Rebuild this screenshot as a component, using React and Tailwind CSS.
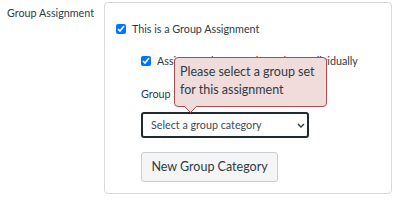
import React from "react";

export default function App() {
  return (
    <div className="w-[400px] h-[201px] bg-white flex text-[#2d3b45] text-[10.75px] font-['Lato','Liberation_Sans',sans-serif] overflow-hidden">
      {/* label column */}
      <div className="w-[104px] shrink-0 pl-[7px] pt-[5px] leading-[16px]">Group Assignment</div>

      {/* options panel */}
      <div className="mt-[2px] w-[288px] h-[192px] border border-[#d7dadc] rounded-[4px] pl-[11px] pt-[18px]">
        <label className="flex items-center gap-[6px] h-[16px]">
          <input type="checkbox" checked readOnly className="w-[10px] h-[10px] m-0" />
          <span>This is a Group Assignment</span>
        </label>

        <div className="pl-[25px] pt-[16px]">
          <label className="flex items-center gap-[6px] h-[16px]">
            <input type="checkbox" checked readOnly className="w-[10px] h-[10px] m-0" />
            <span>Assign Grades to Each Student Individually</span>
          </label>

          <div className="mt-[17px] leading-[16px]">Group Set</div>

          <div className="relative mt-[10px]">
            {/* error tooltip */}
            <div className="absolute left-[33px] bottom-[31px] w-[153px] z-10">
              <div className="bg-[#f1dcdc] border border-[#b5484b] rounded-[4px] pl-[5px] pt-[5px] pb-[7px] text-[12.5px] leading-[18px] text-[#2d3b45]">
                Please select a group set
                <br />
                for this assignment
              </div>
              <svg className="absolute left-[10px] -bottom-[6px]" width="13" height="7" viewBox="0 0 13 7">
                <path d="M0 0 L6.5 6.5 L13 0" fill="#f1dcdc" stroke="#b5484b" strokeWidth="1" />
              </svg>
            </div>

            <div className="w-[168px] h-[26px] border-2 border-[#1f2a33] rounded-[3px] flex items-center justify-between pl-[8px] pr-[2px] text-[10.75px] text-[#3f4a54] bg-white">
              <span>Select a group category</span>
              <svg width="8" height="5" viewBox="0 0 8 5">
                <path d="M1 1 L4 4 L7 1" fill="none" stroke="#2d3b45" strokeWidth="1.4" />
              </svg>
            </div>
          </div>

          <button className="mt-[14px] w-[137px] h-[30px] bg-[#f5f5f5] border border-[#c7cdd1] rounded-[3px] text-[12.5px] text-[#2d3b45]">
            New Group Category
          </button>
        </div>
      </div>
    </div>
  );
}
